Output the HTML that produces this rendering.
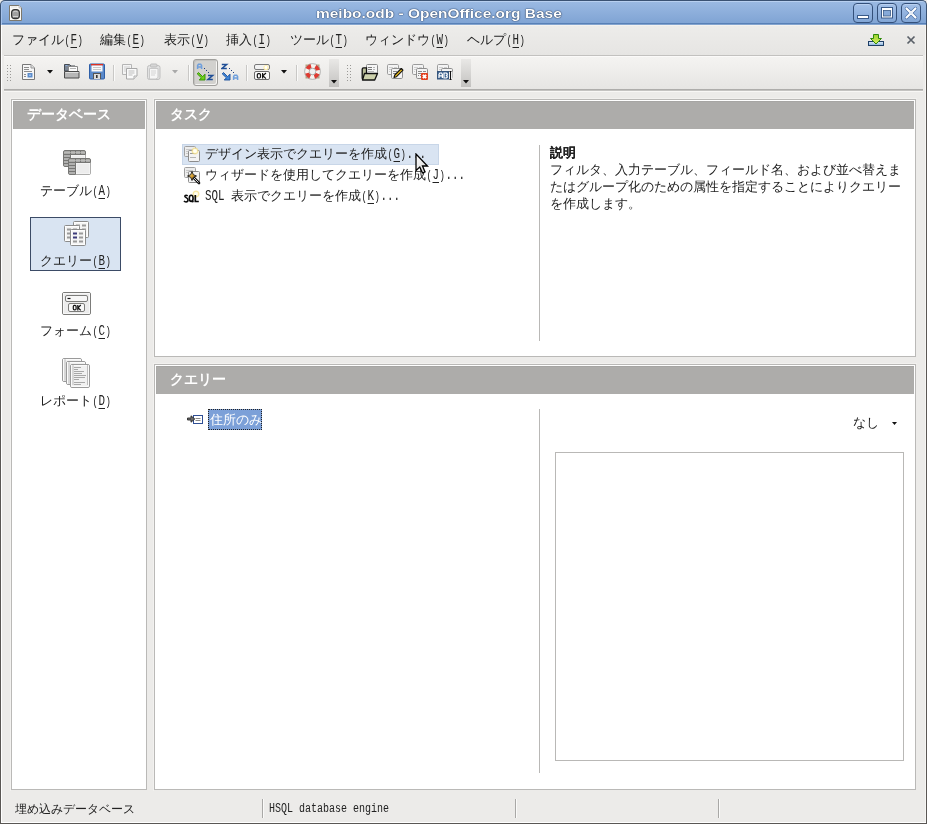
<!DOCTYPE html>
<html><head><meta charset="utf-8">
<style>
*{box-sizing:border-box;margin:0;padding:0}
html,body{width:927px;height:824px;overflow:hidden;background:#ecebe9}
body{position:relative;will-change:transform;font-family:"Liberation Sans",sans-serif;font-size:13px;color:#222}
.a{position:absolute}
.t{position:absolute;white-space:nowrap;line-height:16px;height:16px}
.m{display:inline-block;font-family:"Liberation Mono",monospace;font-size:14.5px;transform:scaleX(.7471);transform-origin:0 50%}
.u{text-decoration:underline;text-underline-offset:3px}
.p{font-size:12px;letter-spacing:.75px;padding-left:.75px}
.sep{position:absolute;width:2px;background:#c9c8c6;border-right:1px solid #fafaf9}
.ssep{position:absolute;width:2px;background:#a9a8a6;border-right:1px solid #fafaf9}
.grip{position:absolute;width:6px;background-image:radial-gradient(circle,#9a9996 0.8px,transparent 1px);background-size:3px 3px}
.panel{position:absolute;border:1px solid #bab9b7;background:#fff}
.panel .hd{position:absolute;left:1px;top:1px;right:1px;height:28px;background:#adacaa;border-top:1px solid #a6a5a3;border-left:1px solid #aaa9a7}
.hdt{position:absolute;color:#fff;font-weight:bold;font-size:13.7px;line-height:16px;white-space:nowrap}
.vsep{position:absolute;width:1px;background:#b9b8b6}
</style></head><body>
<!-- window frame -->
<div class="a" style="left:0;top:24px;width:1px;height:800px;background:#5a5754"></div>
<div class="a" style="left:926px;top:24px;width:1px;height:800px;background:#5a5754"></div><div class="a" style="left:925px;top:25px;width:1px;height:798px;background:#f6f5f3"></div>
<div class="a" style="left:0;top:823px;width:927px;height:1px;background:#5a5754"></div>
<div class="a" style="left:1px;top:25px;width:1px;height:798px;background:#fff"></div>
<div class="a" style="left:1px;top:822px;width:925px;height:1px;background:#fff"></div>
<!-- title bar -->
<div class="a" style="left:0;top:0;width:927px;height:25px;border:1px solid #3a5273;border-bottom:0;border-radius:5px 5px 0 0;background:linear-gradient(#b8d0f0 0,#b8d0f0 1px,#9ab9e2 1px,#80a4d4 22px,#4f78ae 22px,#5f88bf 23px,#a9c0de 24px);box-shadow:inset 1px 0 0 #a6c2ea"></div>
<div class="t" style="left:316px;top:6px;font-size:13.3px;font-weight:bold;color:#fff;transform:scaleX(1.163);transform-origin:0 0;text-shadow:0 0 1.2px #1a3358,0 0 1px #1a3358,0 0 .6px #1a3358">meibo.odb - OpenOffice.org Base</div>
<!-- title icon -->
<svg class="a" style="left:8px;top:4px" width="15" height="18" viewBox="0 0 15 18">
<path d="M1.5 1.5h9.5l2.5 2.5v12.5h-12z" fill="#fbfaf6" stroke="#7d786c"/>
<path d="M11 1.5v2.5h2.5" fill="#e6e6e6" stroke="#aaa" stroke-width=".6"/>
<path d="M3 3h6" stroke="#ddd" stroke-width=".8"/>
<rect x="3.6" y="5.6" width="7.8" height="9" rx="3.2" fill="#a0a0a0" stroke="#333" stroke-width="1.2"/>
<path d="M5.2 8c.8-.9 3.8-.9 4.6 0M5 12.5h5" stroke="#d8d8d8" stroke-width=".9" fill="none"/>
<path d="M5.5 13.5h4" stroke="#777" stroke-width=".8"/>
</svg>
<!-- title buttons -->
<div class="a" style="left:853px;top:3px;width:20px;height:20px;border:1px solid #34507a;border-radius:4px;background:linear-gradient(#a3c0e8,#82a6d6);box-shadow:inset 0 1px 0 #b9d0f0"></div>
<div class="a" style="left:877px;top:3px;width:20px;height:20px;border:1px solid #34507a;border-radius:4px;background:linear-gradient(#a3c0e8,#82a6d6);box-shadow:inset 0 1px 0 #b9d0f0"></div>
<div class="a" style="left:901px;top:3px;width:20px;height:20px;border:1px solid #34507a;border-radius:4px;background:linear-gradient(#a3c0e8,#82a6d6);box-shadow:inset 0 1px 0 #b9d0f0"></div>
<svg class="a" style="left:853px;top:3px" width="68" height="20" viewBox="0 0 68 20">
<rect x="4.5" y="12.5" width="11" height="3" fill="#fff" stroke="#3a5a88"/>
<rect x="28.5" y="4.5" width="11" height="10.5" fill="#fff" stroke="#3a5a88"/>
<rect x="30.5" y="7.5" width="7" height="5.5" fill="#86a9d8" stroke="#3a5a88" stroke-width=".8"/>
<path d="M53.5 5.5l9 9M62.5 5.5l-9 9" stroke="#4a6fa5" stroke-width="3.4" stroke-linecap="round"/>
<path d="M53.5 5.5l9 9M62.5 5.5l-9 9" stroke="#fff" stroke-width="2.2" stroke-linecap="round"/>
<path d="M56.5 8.5l3 3M59.5 8.5l-3 3" stroke="#e4ecf7" stroke-width="1"/>
</svg>
<!-- menu bar -->
<div class="a" style="left:2px;top:25px;width:923px;height:30px;background:linear-gradient(#f4f2ef 0,#f4f2ef 1px,#edecea 1px,#e6e5e3 30px)"></div>
<div class="t" style="left:12px;top:32px">ファイル<span class="m" style="margin-right:-6.60px"><span class="p">(</span><span class="u">F</span><span class="p">)</span></span></div>
<div class="t" style="left:100px;top:32px">編集<span class="m" style="margin-right:-6.60px"><span class="p">(</span><span class="u">E</span><span class="p">)</span></span></div>
<div class="t" style="left:164px;top:32px">表示<span class="m" style="margin-right:-6.60px"><span class="p">(</span><span class="u">V</span><span class="p">)</span></span></div>
<div class="t" style="left:226px;top:32px">挿入<span class="m" style="margin-right:-6.60px"><span class="p">(</span><span class="u">I</span><span class="p">)</span></span></div>
<div class="t" style="left:290px;top:32px">ツール<span class="m" style="margin-right:-6.60px"><span class="p">(</span><span class="u">T</span><span class="p">)</span></span></div>
<div class="t" style="left:365px;top:32px">ウィンドウ<span class="m" style="margin-right:-6.60px"><span class="p">(</span><span class="u">W</span><span class="p">)</span></span></div>
<div class="t" style="left:467px;top:32px">ヘルプ<span class="m" style="margin-right:-6.60px"><span class="p">(</span><span class="u">H</span><span class="p">)</span></span></div>
<svg class="a" style="left:867px;top:33px" width="18" height="14" viewBox="0 0 18 14">
<defs><linearGradient id="tray" x1="0" y1="0" x2="0" y2="1"><stop offset="0" stop-color="#e6f0fa"/><stop offset="1" stop-color="#86b0dc"/></linearGradient>
<linearGradient id="arr" x1="0" y1="0" x2="0" y2="1"><stop offset="0" stop-color="#9ad030"/><stop offset="1" stop-color="#d8ee60"/></linearGradient></defs>
<rect x="1.5" y="8.5" width="15" height="4" fill="url(#tray)" stroke="#1e3e66"/>
<path d="M6.5 1.5h5v4h3l-5.5 5.5-5.5-5.5h3z" fill="url(#arr)" stroke="#2e8a0a" stroke-linejoin="round"/>
</svg>
<svg class="a" style="left:906px;top:35px" width="10" height="10"><path d="M1.5 1.5l7 7M8.5 1.5l-7 7" stroke="#5a6068" stroke-width="1.7"/></svg>
<div class="a" style="left:4px;top:55px;width:919px;height:1px;background:#c2c1bf"></div>

<!-- toolbar -->
<div class="a" style="left:4px;top:56px;width:919px;height:33px;background:linear-gradient(#f5f4f2,#e6e5e3)"></div>
<div class="a" style="left:4px;top:89px;width:919px;height:1px;background:#aeadab"></div>
<div class="a" style="left:4px;top:90px;width:919px;height:1px;background:#c4c3c1"></div>
<div class="a" style="left:4px;top:91px;width:919px;height:1px;background:#f8f7f5"></div>
<div class="a" style="left:4px;top:56px;width:919px;height:1px;background:#fbfaf9"></div>
<div class="grip" style="left:6px;top:64px;height:18px"></div>
<div class="grip" style="left:346px;top:64px;height:18px"></div>
<div class="sep" style="left:113px;top:65px;height:16px"></div>
<div class="sep" style="left:188px;top:65px;height:16px"></div>
<div class="sep" style="left:246px;top:65px;height:16px"></div>
<div class="sep" style="left:296px;top:65px;height:16px"></div>
<!-- new -->
<svg class="a" style="left:21px;top:63px" width="16" height="18" viewBox="0 0 16 18">
<path d="M1.5 1.5h8.5l3.5 3.5v11.5h-12z" fill="#f6f6f6" stroke="#777"/>
<path d="M10 1.5v3.5h3.5" fill="#e0e0e0" stroke="#999"/>
<path d="M3 4.5h5M3 6.5h5M3 8.5h8M3 11.5h2M3 13.5h2" stroke="#8d8d8d"/>
<rect x="6.5" y="10" width="5" height="4.5" fill="#5d8dcc"/><rect x="8" y="11.5" width="2" height="1.5" fill="#9cbde8"/>
</svg>
<svg class="a" style="left:47px;top:70px" width="6" height="4"><path d="M0 0h6l-3 3.5z" fill="#111"/></svg>
<!-- open -->
<svg class="a" style="left:63px;top:63px" width="18" height="17" viewBox="0 0 18 17">
<path d="M1.5 1.5h5l1.5 1.5h4v5h-10.5z" fill="#7c8694" stroke="#454b53"/>
<path d="M2.5 2.5h2" stroke="#8fb0e0"/>
<path d="M5.5 3.5h9v5h-9z" fill="#fdfdfd" stroke="#8a8a8a"/>
<path d="M7 5.5h6" stroke="#b5b5b5"/>
<path d="M1.5 8.5h14.5v6.5h-14.5z" fill="#b7b7b7" stroke="#4a4a4a" rx="1"/>
<path d="M2.5 9.5h13" stroke="#dedede"/>
</svg>
<!-- save -->
<svg class="a" style="left:88px;top:63px" width="18" height="17" viewBox="0 0 18 17">
<rect x="1.5" y="1" width="15" height="15" rx="1" fill="#5a89c9" stroke="#2e5fa8"/>
<rect x="3" y="1" width="12" height="1.6" fill="#e03020"/>
<rect x="3.5" y="2.5" width="11" height="6" fill="#fafafa"/>
<path d="M5 4.5h8M5 6.5h8" stroke="#c8c8c8"/>
<rect x="5" y="10" width="8" height="6" fill="#555"/><rect x="6" y="11" width="6" height="5" fill="#dcdcdc"/><rect x="8" y="12" width="1.6" height="3" fill="#333"/>
</svg>
<!-- copy/paste disabled -->
<svg class="a" style="left:121px;top:63px" width="18" height="18" viewBox="0 0 18 18">
<path d="M1.5 1.5h9v10h-9z" fill="#f4f4f4" stroke="#b5b5b5"/>
<path d="M3 4h6M3 6h6M3 8h4" stroke="#d0d0d0"/>
<path d="M5.5 5.5h10.5v7.5l-3 3h-7.5z" fill="#fafafa" stroke="#a8a8a8"/>
<path d="M13 16v-3h3" fill="#e8e8e8" stroke="#b0b0b0"/>
<path d="M7.5 8h6M7.5 10h6M7.5 12h4" stroke="#bdbdbd"/>
</svg>
<svg class="a" style="left:146px;top:63px" width="16" height="18" viewBox="0 0 16 18">
<rect x="1.5" y="2.5" width="12.5" height="14" rx="2" fill="#e2e2e2" stroke="#c0c0c0"/>
<rect x="4.5" y="1" width="6.5" height="3" rx="1" fill="#d6d6d6" stroke="#bdbdbd"/>
<path d="M3.5 5.5h8.5v9l-2 1.5h-6.5z" fill="#f6f6f6" stroke="#c8c8c8"/>
<path d="M5 8h5M5 10h5M5 12h4" stroke="#d4d4d4"/>
</svg>
<svg class="a" style="left:172px;top:70px" width="6" height="4"><path d="M0 0h6l-3 3.5z" fill="#a9a9a9"/></svg>
<!-- sort asc (pressed) -->
<div class="a" style="left:193px;top:59px;width:25px;height:27px;border:1px solid #a09f9c;border-radius:3px;background:#d2d1ce;box-shadow:inset -1px -1px 0 #f6f5f3,inset 1px 1px 0 #c2c1be"></div>
<svg class="a" style="left:196px;top:63px" width="21" height="18" viewBox="0 0 21 18">
<path d="M1.6 6V2.6l.9-1.3h2.2l.9 1.3V6M1.6 4.1h4" fill="none" stroke="#6f9fdc" stroke-width="1.5"/>
<path d="M8 5.5h1M10 7.5h1M12 9.5h1" stroke="#1e3e80"/>
<path d="M2.5 9.5L6.6 13.6 9 11.2V17H3.2L5.4 14.8 1.2 10.8Z" fill="#6ed21a" stroke="#2f8a00" stroke-width=".9" stroke-linejoin="round"/>
<path d="M12 12.6h4.6l-4.6 3.8h4.8" fill="none" stroke="#1f4e96" stroke-width="1.5"/>
</svg>
<svg class="a" style="left:221px;top:63px" width="21" height="18" viewBox="0 0 21 18">
<path d="M.8 1.6h4.8l-4.6 3.8h4.8" fill="none" stroke="#1f4e96" stroke-width="1.5"/>
<path d="M8 5.5h1M10 7.5h1M12 9.5h1" stroke="#1e3e80"/>
<path d="M2.5 9.5L6.6 13.6 9 11.2V17H3.2L5.4 14.8 1.2 10.8Z" fill="#3f86d8" stroke="#1c4f9a" stroke-width=".9" stroke-linejoin="round"/>
<path d="M12.6 17V13.6l.9-1.3h2.2l.9 1.3V17M12.6 15.1h4" fill="none" stroke="#6f9fdc" stroke-width="1.5"/>
</svg>
<!-- form OK -->
<svg class="a" style="left:253px;top:63px" width="18" height="18" viewBox="0 0 18 18">
<rect x="1.5" y="1.5" width="15" height="5" rx="1.5" fill="#f2f2f2" stroke="#7a7a7a"/>
<circle cx="13" cy="4.5" r="2.6" fill="#fff0b0"/><circle cx="13" cy="4.5" r="1.4" fill="#fff"/>
<rect x="1.5" y="8.5" width="15" height="8" rx="1.5" fill="#fbfbfb" stroke="#6a6a6a"/>
<rect x="4.3" y="10.6" width="3.2" height="4.4" rx="1.2" fill="none" stroke="#111" stroke-width="1.2"/><path d="M9.6 10v5.6M13 10l-3.2 2.8 3.2 2.8" fill="none" stroke="#111" stroke-width="1.2"/>
</svg>
<svg class="a" style="left:281px;top:70px" width="6" height="4"><path d="M0 0h6l-3 3.5z" fill="#111"/></svg>
<!-- lifebuoy -->
<svg class="a" style="left:304px;top:63px" width="17" height="17" viewBox="0 0 17 17">
<rect x="1.5" y="1.5" width="14" height="14" fill="#8a6a2a" opacity=".55"/>
<circle cx="8.5" cy="8.5" r="5.6" fill="none" stroke="#f7f3ef" stroke-width="4.6"/>
<circle cx="8.5" cy="8.5" r="5.6" fill="none" stroke="#e03a30" stroke-width="4.6" stroke-dasharray="4.4 4.4" stroke-dashoffset="-2.2"/>
<circle cx="8.5" cy="8.5" r="7.9" fill="none" stroke="#9a9a9a" stroke-width=".7"/>
<circle cx="8.5" cy="8.5" r="3.3" fill="#f0f0f0" stroke="#999" stroke-width=".7"/>
</svg>
<!-- toolbar end -->
<div class="a" style="left:329px;top:59px;width:10px;height:28px;background:linear-gradient(#e9e8e6,#c3c2c0)"></div>
<svg class="a" style="left:331px;top:80px" width="6" height="4"><path d="M0 0h6l-3 3.5z" fill="#111"/></svg>
<!-- db tools -->
<svg class="a" style="left:361px;top:64px" width="18" height="17" viewBox="0 0 18 17">
<rect x="5.5" y="0.5" width="11" height="9" rx="1" fill="#f6f6f6" stroke="#8a8a8a"/>
<path d="M7 3.5h4M12.5 3.5h1M7 5.5h4M12.5 5.5h1M7.5 7.5h1M9.5 7.5h1M11.5 7.5h1" stroke="#7a7a7a"/>
<path d="M1.2 5.2c0-.8.6-1.3 1.3-1.3h3v11.5h-3c-.7 0-1.3-.6-1.3-1.3z" fill="#b9bd98" stroke="#111" stroke-width="1.3"/>
<path d="M3.5 9.5h13l-2.8 6.5h-12.2z" fill="#cdd1ac" stroke="#111" stroke-width="1.3" stroke-linejoin="round"/>
</svg>
<svg class="a" style="left:386px;top:64px" width="18" height="17" viewBox="0 0 18 17"><rect x="1.5" y="0.5" width="11" height="10" rx="1.2" fill="#f4f4f4" stroke="#9c9c9c"/><path d="M3 3.5h4M8 3.5h3M3 5.5h4M8 5.5h1M3 7.5h1M5 7.5h1M7 7.5h1" stroke="#cfcfcf"/><rect x="5.5" y="4.5" width="11" height="10" rx="1.2" fill="#f4f4f4" stroke="#8e8e8e"/><path d="M7 7.5h4M7 9.5h3" stroke="#888"/><path d="M8 13.5l.8-2.5 6.5-6.5 1.7 1.7-6.5 6.5z" fill="#f3c21a" stroke="#111" stroke-width="1.1" stroke-linejoin="round"/></svg>
<svg class="a" style="left:411px;top:64px" width="18" height="17" viewBox="0 0 18 17"><rect x="1.5" y="0.5" width="11" height="10" rx="1.2" fill="#f4f4f4" stroke="#9c9c9c"/><path d="M3 3.5h4M8 3.5h3M3 5.5h4M8 5.5h1M3 7.5h1M5 7.5h1M7 7.5h1" stroke="#cfcfcf"/><rect x="5.5" y="4.5" width="11" height="10" rx="1.2" fill="#f4f4f4" stroke="#8e8e8e"/><path d="M7 7.5h4M12 7.5h3M7 9.5h4M12 9.5h1M7 11.5h1M9 11.5h1M11 11.5h1" stroke="#8a8a8a"/><rect x="10" y="9" width="7" height="7" rx="1" fill="#e2401e"/><path d="M11.9 10.9l3.2 3.2M15.1 10.9l-3.2 3.2" stroke="#fff" stroke-width="2"/></svg>
<svg class="a" style="left:436px;top:64px" width="18" height="17" viewBox="0 0 18 17"><rect x="1.5" y="0.5" width="11" height="10" rx="1.2" fill="#f4f4f4" stroke="#9c9c9c"/><path d="M3 3.5h4M8 3.5h3M3 5.5h4M8 5.5h1M3 7.5h1M5 7.5h1M7 7.5h1" stroke="#cfcfcf"/><rect x="5.5" y="4.5" width="11" height="10" rx="1.2" fill="#f4f4f4" stroke="#8e8e8e"/><path d="M7 7.5h4M12 7.5h3M7 9.5h4M12 9.5h1M7 11.5h1M9 11.5h1M11 11.5h1" stroke="#8a8a8a"/><rect x="1.5" y="7.5" width="11" height="7.5" fill="#3f6592" stroke="#35557c"/>
<path d="M3 14v-3.6l.9-1.4h1.6l.9 1.4V14M3 11.8h3.4" fill="none" stroke="#fff" stroke-width="1.2"/>
<path d="M8 14V9h2.3l.9.8v.9l-.8.8.8.8v.9l-.9.8z" fill="none" stroke="#fff" stroke-width="1.2"/>
<rect x="13" y="7.5" width="3.5" height="7.5" fill="#fafafa"/>
<path d="M13.5 7.5h2M14.5 7.5v7.5M13.5 15.5h2" stroke="#111" stroke-width="1.1"/>
</svg>
<div class="a" style="left:461px;top:59px;width:10px;height:28px;background:linear-gradient(#e9e8e6,#c3c2c0)"></div>
<svg class="a" style="left:463px;top:80px" width="6" height="4"><path d="M0 0h6l-3 3.5z" fill="#111"/></svg>

<!-- left panel -->
<div class="a" style="left:10px;top:98px;width:138px;height:693px;border:1px solid #f2f1ef;border-width:1px 0 0 1px"></div>
<div class="panel" style="left:11px;top:99px;width:136px;height:691px">
  <div class="hd" style="right:1px"></div>
</div>
<div class="hdt" style="left:27px;top:107px">データベース</div>

<!-- tasks panel -->
<div class="a" style="left:153px;top:98px;width:764px;height:260px;border:1px solid #f2f1ef;border-width:1px 0 0 1px"></div>
<div class="panel" style="left:154px;top:99px;width:762px;height:258px"><div class="hd"></div></div>
<div class="hdt" style="left:170px;top:107px">タスク</div>
<div class="vsep" style="left:539px;top:145px;height:196px"></div>

<!-- query panel -->
<div class="a" style="left:153px;top:363px;width:764px;height:428px;border:1px solid #f2f1ef;border-width:1px 0 0 1px"></div>
<div class="panel" style="left:154px;top:364px;width:762px;height:426px"><div class="hd"></div></div>
<div class="hdt" style="left:170px;top:372px">クエリー</div>
<div class="vsep" style="left:539px;top:409px;height:364px"></div>


<!-- left panel items -->
<svg class="a" style="left:62px;top:149px" width="31" height="28" viewBox="0 0 31 28"><rect x="1.5" y="1.5" width="22" height="16" rx="1.5" fill="#aaaaa8" stroke="#767674"/><rect x="9" y="6" width="14" height="11" fill="#ececec" stroke="#fff" stroke-width=".8"/><path d="M8.5 2v15M13.5 2v4M18.5 2v4M2 5.5h21M2 8.5h6M2 11.5h6M2 14.5h6" stroke="#767674"/><path d="M2 3.5h21M2 7h6M2 10h6M2 13h6M2 16h6" stroke="#c4c4c2" stroke-width=".6"/><rect x="6.5" y="9.5" width="22" height="16" rx="1.5" fill="#aaaaa8" stroke="#767674"/><rect x="14" y="14" width="14" height="11" fill="#ececec" stroke="#fff" stroke-width=".8"/><path d="M13.5 10v15M18.5 10v4M23.5 10v4M7 13.5h21M7 16.5h6M7 19.5h6M7 22.5h6" stroke="#767674"/><path d="M7 11.5h21M7 15h6M7 18h6M7 21h6M7 24h6" stroke="#c4c4c2" stroke-width=".6"/></svg>
<div class="t" style="left:40px;top:183px">テーブル<span class="m" style="margin-right:-6.60px"><span class="p">(</span><span class="u">A</span><span class="p">)</span></span></div>

<div class="a" style="left:30px;top:217px;width:91px;height:54px;border:1px solid #3b4b66;background:#d9e4f2"></div>
<svg class="a" style="left:62px;top:219px" width="30" height="30" viewBox="0 0 30 30"><rect x="11.5" y="2.5" width="15" height="16" rx="1" fill="#f4f4f4" stroke="#8c8c8c"/><rect x="12.5" y="3.5" width="13" height="14" fill="none" stroke="#fff" stroke-width=".8"/><path d="M14 6.5h4M14 10.5h4" stroke="#9a9a9a" stroke-width="2"/><path d="M14 14.5h4M20 6.5h4M20 10.5h4M20 14.5h4" stroke="#9a9a9a" stroke-width="2"/><rect x="2.5" y="6.5" width="15" height="16" rx="1" fill="#f4f4f4" stroke="#8c8c8c"/><rect x="3.5" y="7.5" width="13" height="14" fill="none" stroke="#fff" stroke-width=".8"/><path d="M5 10.5h4M5 14.5h4" stroke="#9a9a9a" stroke-width="2"/><path d="M5 18.5h4M11 10.5h4M11 14.5h4M11 18.5h4" stroke="#9a9a9a" stroke-width="2"/><rect x="8.5" y="10.5" width="15" height="16" rx="1" fill="#f4f4f4" stroke="#8c8c8c"/><rect x="9.5" y="11.5" width="13" height="14" fill="none" stroke="#fff" stroke-width=".8"/><path d="M11 14.5h4M11 18.5h4" stroke="#3c3a7a" stroke-width="2"/><path d="M11 22.5h4M17 14.5h4M17 18.5h4M17 22.5h4" stroke="#9a9a9a" stroke-width="2"/></svg>
<div class="t" style="left:40px;top:253px">クエリー<span class="m" style="margin-right:-6.60px"><span class="p">(</span><span class="u">B</span><span class="p">)</span></span></div>

<svg class="a" style="left:61px;top:291px" width="32" height="27" viewBox="0 0 32 27">
<rect x="1.5" y="1.5" width="28" height="22" rx="1.5" fill="#ececec" stroke="#7c7c7a"/>
<rect x="2.5" y="2.5" width="26" height="20" fill="none" stroke="#fafafa" stroke-width=".8"/>
<rect x="4.5" y="4.5" width="22" height="6" rx="1.5" fill="#f7f7f7" stroke="#7c7c7a"/>
<path d="M6.5 7.5h3" stroke="#111" stroke-width="1.2"/>
<rect x="7.5" y="12.5" width="16" height="8" rx="1.5" fill="#f8f8f8" stroke="#7c7c7a"/>
<rect x="12.3" y="14.3" width="2.8" height="4.6" rx="1.2" fill="none" stroke="#111" stroke-width="1.2"/>
<path d="M16.8 14v5.4M19.8 14l-2.8 2.7 2.8 2.7" fill="none" stroke="#111" stroke-width="1.2"/>
</svg>
<div class="t" style="left:40px;top:323px">フォーム<span class="m" style="margin-right:-6.60px"><span class="p">(</span><span class="u">C</span><span class="p">)</span></span></div>

<svg class="a" style="left:61px;top:357px" width="32" height="33" viewBox="0 0 32 33"><rect x="1.5" y="1.5" width="19" height="23" rx="1.5" fill="#f1f1f1" stroke="#9a9a9a"/><rect x="2.5" y="2.5" width="17" height="21" fill="none" stroke="#fff" stroke-width=".7"/><path d="M3.5 3h1M3.5 5h1M3.5 7h1M3.5 9h1M3.5 11h1M3.5 13h1M3.5 15h1M3.5 17h1M3.5 19h1M3.5 21h1M3.5 23h1" stroke="#8a8a8a" stroke-width="1.1"/><rect x="5.5" y="4.5" width="19" height="23" rx="1.5" fill="#f1f1f1" stroke="#9a9a9a"/><rect x="6.5" y="5.5" width="17" height="21" fill="none" stroke="#fff" stroke-width=".7"/><path d="M7.5 6h1M7.5 8h1M7.5 10h1M7.5 12h1M7.5 14h1M7.5 16h1M7.5 18h1M7.5 20h1M7.5 22h1M7.5 24h1M7.5 26h1" stroke="#8a8a8a" stroke-width="1.1"/><rect x="9.5" y="7.5" width="19" height="23" rx="1.5" fill="#f1f1f1" stroke="#9a9a9a"/><rect x="10.5" y="8.5" width="17" height="21" fill="none" stroke="#fff" stroke-width=".7"/><path d="M11.5 9h1M11.5 11h1M11.5 13h1M11.5 15h1M11.5 17h1M11.5 19h1M11.5 21h1M11.5 23h1M11.5 25h1M11.5 27h1" stroke="#8a8a8a" stroke-width="1.1"/><path d="M26 9h1M26 11h1M26 13h1M26 15h1M26 17h1M26 19h1M26 21h1M26 23h1M26 25h1M26 27h1" stroke="#8a8a8a" stroke-width="1.1"/><path d="M13 10.5H20M13 12.5H17M13 14.5H23M13 16.5H21M13 18.5H25M13 20.5H24M13 22.5H18M13 25.5H24M13 27.5H20" stroke="#a8a8a8"/></svg>
<div class="t" style="left:40px;top:393px">レポート<span class="m" style="margin-right:-6.60px"><span class="p">(</span><span class="u">D</span><span class="p">)</span></span></div>

<!-- tasks -->
<div class="a" style="left:182px;top:144px;width:257px;height:21px;border:1px solid #c8d6e8;background:#d9e4f2"></div>
<svg class="a" style="left:183px;top:145px" width="19" height="19" viewBox="0 0 19 19">
<defs><radialGradient id="gl"><stop offset="0" stop-color="#fff"/><stop offset=".45" stop-color="#fffbe0"/><stop offset=".7" stop-color="#f3dc80" stop-opacity=".8"/><stop offset="1" stop-color="#f3dc80" stop-opacity="0"/></radialGradient>
<linearGradient id="gold" x1="0" y1="0" x2="1" y2="1"><stop offset="0" stop-color="#fff4c0"/><stop offset=".5" stop-color="#d8a030"/><stop offset="1" stop-color="#7a5010"/></linearGradient></defs>
<rect x="1.5" y="1.5" width="11" height="10" rx="1" fill="#ededed" stroke="#a0a0a0"/>
<path d="M3 4.5h7M3 6.5h7M3 8.5h3" stroke="#c8c8c8"/>
<rect x="5.5" y="5.5" width="11" height="11" rx="1" fill="#f3f3f3" stroke="#8c8c8c"/>
<path d="M7 8.5h6" stroke="#999"/><path d="M7.5 12.5h1M9.5 12.5h1M11.5 12.5h1" stroke="#777"/>
<circle cx="12" cy="6" r="4" fill="url(#gl)"/>
</svg>
<div class="t" style="left:205px;top:146px">デザイン表示でクエリーを作成<span class="m" style="margin-right:-13.20px"><span class="p">(</span><span class="u">G</span><span class="p">)</span>...</span></div>
<svg class="a" style="left:183px;top:166px" width="19" height="19" viewBox="0 0 19 19">
<rect x="1.5" y="1.5" width="11" height="10" rx="1" fill="#ededed" stroke="#a0a0a0"/>
<path d="M3 4.5h7M3 6.5h7" stroke="#c8c8c8"/>
<rect x="5.5" y="5.5" width="11" height="11" rx="1" fill="#f3f3f3" stroke="#8c8c8c"/>
<path d="M10 11l6 6" stroke="#111" stroke-width="2.6" stroke-linecap="round"/><path d="M10.5 11.5l5 5" stroke="#eee" stroke-width=".9"/>
<path d="M9 5.5L10.3 8.7 13.5 10 10.3 11.3 9 14.5 7.7 11.3 4.5 10 7.7 8.7Z" fill="url(#gold)" stroke="#1a1a1a" stroke-width=".9" stroke-linejoin="round"/>
</svg>
<div class="t" style="left:205px;top:167px">ウィザードを使用してクエリーを作成<span class="m" style="margin-right:-13.20px"><span class="p">(</span><span class="u">J</span><span class="p">)</span>...</span></div>
<svg class="a" style="left:183px;top:187px" width="19" height="18" viewBox="0 0 19 18">
<circle cx="13" cy="7" r="4" fill="url(#gl)"/>
<path d="M4.6 9.2c-.4-.7-1-1-1.6-1-.8 0-1.2.4-1.2 1 0 1.6 3.2 1.3 3.2 3.8 0 1.2-.9 1.9-2 1.9-.9 0-1.6-.4-2-1.1" fill="none" stroke="#0a0a0a" stroke-width="1.5"/>
<ellipse cx="8.2" cy="11.3" rx="1.9" ry="3.1" fill="none" stroke="#0a0a0a" stroke-width="1.6"/>
<path d="M9 13.6l1.3 1.6" stroke="#0a0a0a" stroke-width="1.6"/>
<path d="M12.3 8v6.5h3.5" fill="none" stroke="#0a0a0a" stroke-width="1.7"/>
</svg>
<div class="t" style="left:205px;top:188px"><span class="m" style="margin-right:-8.80px">SQL&nbsp;</span>表示でクエリーを作成<span class="m" style="margin-right:-13.20px"><span class="p">(</span><span class="u">K</span><span class="p">)</span>...</span></div>
<!-- cursor -->
<svg class="a" style="left:415px;top:153px" width="16" height="24" viewBox="0 0 16 24">
<defs><linearGradient id="cg" x1="0" y1="0" x2="1" y2="1"><stop offset="0" stop-color="#fff"/><stop offset="1" stop-color="#d0d0d0"/></linearGradient></defs>
<path d="M1 1V17.5L4.8 14 7.5 20 10 19 7.5 13H12.5Z" fill="url(#cg)" stroke="#000" stroke-width="1.3" stroke-linejoin="miter"/>
</svg>

<!-- description -->
<div class="t" style="left:550px;top:145px;font-weight:bold;text-shadow:.3px 0 0 #222">説明</div>
<div class="a" style="left:550px;top:161px;width:360px;line-height:17px">フィルタ、入力テーブル、フィールド名、および並べ替えま<br>たはグループ化のための属性を指定することによりクエリー<br>を作成します。</div>

<!-- query list -->
<svg class="a" style="left:186px;top:413px" width="18" height="12" viewBox="0 0 18 12">
<rect x="7.5" y="2.5" width="9" height="8" fill="#fff" stroke="#2f4f95"/>
<path d="M9.5 5.5h5M9.5 7.5h5" stroke="#8a8a8a"/>
<path d="M1.5 5h3.5v-2.2l3.8 3.2-3.8 3.2v-2.2h-3.5z" fill="#6a6a6a" stroke="#2a2a2a" stroke-width=".9" stroke-linejoin="round"/>
</svg>
<div class="a" style="left:208px;top:409px;width:54px;height:21px;background:#7ca0d8;border:1px dotted #222"></div>
<div class="t" style="left:210px;top:412px;color:#fff">住所のみ</div>
<div class="t" style="left:853px;top:415px">なし</div>
<svg class="a" style="left:892px;top:422px" width="5" height="3"><path d="M0 0h5l-2.5 3z" fill="#111"/></svg>
<div class="a" style="left:555px;top:452px;width:349px;height:309px;border:1px solid #b9b8b6;background:#fff"></div>

<!-- status bar -->
<div class="t" style="left:15px;top:802px;font-size:12px;line-height:15px">埋め込みデータベース</div>
<div class="ssep" style="left:262px;top:799px;height:19px"></div>
<div class="t" style="left:269px;top:802px;font-family:'Liberation Mono',monospace;font-size:12.5px;line-height:15px;transform:scaleX(.8);transform-origin:0 0">HSQL database engine</div>
<div class="ssep" style="left:515px;top:799px;height:19px"></div>
<div class="ssep" style="left:718px;top:799px;height:19px"></div>
</body></html>
